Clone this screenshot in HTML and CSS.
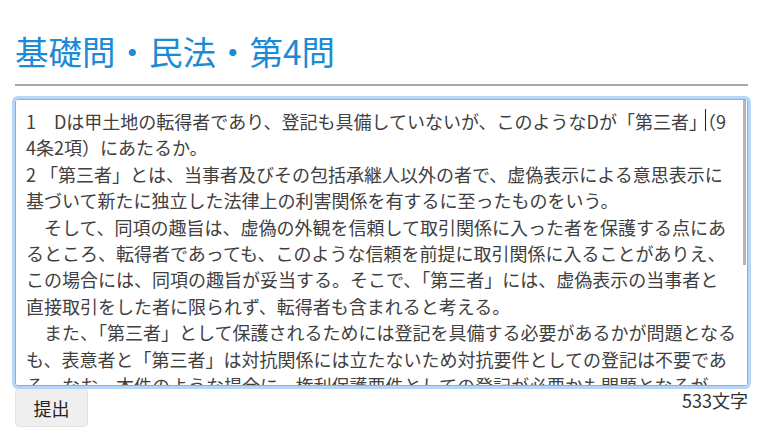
FILE: index.html
```html
<!DOCTYPE html>
<html lang="ja">
<head>
<meta charset="utf-8">
<title>基礎問・民法・第4問</title>
<link rel="stylesheet" href="styles.css">
</head>
<body>
<main class="page">
  <h1 class="title">基礎問・民法・第4問</h1>
  <div class="editor">
    <textarea class="answer" spellcheck="false">1　Dは甲土地の転得者であり、登記も具備していないが、このようなDが「第三者」（9
4条2項）にあたるか。
2 「第三者」とは、当事者及びその包括承継人以外の者で、虚偽表示による意思表示に
基づいて新たに独立した法律上の利害関係を有するに至ったものをいう。
　そして、同項の趣旨は、虚偽の外観を信頼して取引関係に入った者を保護する点にあ
るところ、転得者であっても、このような信頼を前提に取引関係に入ることがありえ、
この場合には、同項の趣旨が妥当する。そこで、「第三者」には、虚偽表示の当事者と
直接取引をした者に限られず、転得者も含まれると考える。
　また、「第三者」として保護されるためには登記を具備する必要があるかが問題となる
も、表意者と「第三者」は対抗関係には立たないため対抗要件としての登記は不要であ
る。なお、本件のような場合に、権利保護要件としての登記が必要かも問題となるが、
帰責性の大きい表意者との関係では、権利保護要件としての登記も不要と解する。
3　よって、Dは、善意であれば、登記を具備していなくとも、「第三者」にあたる。
4　以上より、Aは、Dに対して、AB間の売買契約が虚偽表示により無効であることを
主張することができず、Dは、甲土地の所有権を有効に取得する。したがって、Aの
請求は認められない。また、Bは、Dに対して、甲土地の明渡しを求めることもでき
ない。</textarea>
    <span class="caret" aria-hidden="true"></span>
    <span class="thumb" aria-hidden="true"></span>
  </div>
  <div class="actions">
    <button class="submit" type="button">提出</button>
    <span class="count">533文字</span>
  </div>
</main>
</body>
</html>
```

FILE: styles.css
```css
html, body {
  margin: 0;
  padding: 0;
  background: #ffffff;
}

body {
  font-family: "Noto Sans CJK JP", "Noto Sans", sans-serif;
  color: #333333;
}

.page {
  padding: 0 28px 0 15px;
}

.title {
  margin: 0;
  padding: 31px 0 13px;
  font-size: 33.5px;
  line-height: 40px;
  font-weight: 400;
  color: #1b8bd6;
  border-bottom: 2px solid #a8a8a8;
}

.editor {
  position: relative;
  margin-top: 13px;
}

.answer {
  display: block;
  box-sizing: border-box;
  width: 100%;
  height: 287px;
  margin: 0;
  padding: 8px 6px 0 10px;
  border: 1px solid #7fb0ea;
  border-radius: 3px;
  box-shadow: 0 0 0 3px #b5d5f9;
  outline: none;
  resize: none;
  font-family: "Noto Sans CJK JP", "Noto Sans", sans-serif;
  font-size: 18px;
  line-height: 26.4px;
  color: #404040;
  background: #ffffff;
  scrollbar-width: none;
}

/* decorative scrollbar thumb, drawn over the textarea's right edge */
.thumb {
  position: absolute;
  top: 1px;
  right: 2px;
  width: 3px;
  height: 165px;
  background: #b4b4b4;
}

/* text caret sitting between 」 and （ on the first line */
.caret {
  position: absolute;
  top: 10px;
  left: 690px;
  width: 1px;
  height: 22px;
  background: #222222;
}

.actions {
  display: flex;
  justify-content: space-between;
  align-items: flex-start;
  margin-top: 2px;
}

.submit {
  width: 73px;
  height: 39px;
  padding: 0;
  border: 1px solid #e2e2e2;
  border-radius: 4px;
  background: #efefef;
  font-family: "Noto Sans CJK JP", "Noto Sans", sans-serif;
  font-size: 18px;
  color: #222222;
}

.count {
  font-size: 18px;
  line-height: 24px;
  color: #333333;
}
```
